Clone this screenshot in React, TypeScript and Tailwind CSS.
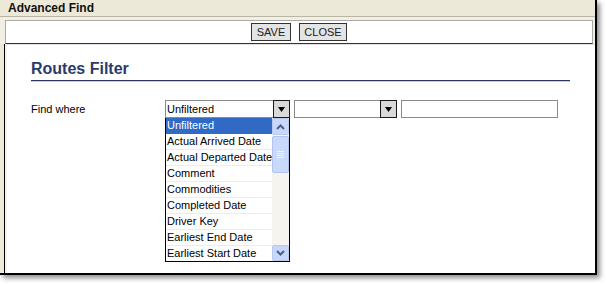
const options = [
  "Unfiltered",
  "Actual Arrived Date",
  "Actual Departed Date",
  "Comment",
  "Commodities",
  "Completed Date",
  "Driver Key",
  "Earliest End Date",
  "Earliest Start Date",
];

const Arrow = () => (
  <div className="w-[17px] h-[18px] border border-[#1a1a1a] bg-[#d9d9d9] flex items-center justify-center">
    <svg width="7" height="5" viewBox="0 0 7 5">
      <path d="M0 0h7L3.5 5z" fill="#000" />
    </svg>
  </div>
);

const Chevron = ({ up }: { up?: boolean }) => (
  <svg width="9" height="6" viewBox="0 0 9 6">
    <path
      d={up ? "M1 5L4.5 1.5L8 5" : "M1 1L4.5 4.5L8 1"}
      stroke="#4d6185"
      strokeWidth="2"
      fill="none"
    />
  </svg>
);

const Scrollbar = () => (
  <div className="absolute right-0 top-0 bottom-0 w-[17px] bg-[#f5f4ee] flex flex-col">
    <div className="h-[17px] border border-[#b7c9f3] bg-[#c6d7fb] rounded-[2px] flex items-center justify-center">
      <Chevron up />
    </div>
    <div className="mt-[1px] h-[37px] border border-[#b0c5f3] bg-[#c9d9fc] rounded-[2px] flex flex-col items-center justify-center gap-[1px]">
      <div className="w-[7px] h-[1px] bg-[#eef3fe]" />
      <div className="w-[7px] h-[1px] bg-[#eef3fe]" />
      <div className="w-[7px] h-[1px] bg-[#eef3fe]" />
      <div className="w-[7px] h-[1px] bg-[#eef3fe]" />
    </div>
    <div className="flex-1" />
    <div className="h-[16px] border border-[#b7c9f3] bg-[#c6d7fb] rounded-[2px] flex items-center justify-center">
      <Chevron />
    </div>
  </div>
);

const DropList = () => (
  <div className="absolute left-0 top-[18px] w-[125px] border-x border-b border-black bg-white">
    <div className="relative pr-[17px]">
      {options.map((o, i) => (
        <div
          key={o}
          className={
            i === 0
              ? "h-[16px] leading-[15px] pl-[1px] bg-[#316ac5] text-white border-b border-[#316ac5] whitespace-nowrap overflow-hidden"
              : i === options.length - 1
              ? "h-[15px] leading-[15px] pl-[1px] whitespace-nowrap overflow-hidden"
              : "h-[16px] leading-[15px] pl-[1px] border-b border-[#ececec] whitespace-nowrap overflow-hidden"
          }
        >
          {o}
        </div>
      ))}
      <Scrollbar />
    </div>
  </div>
);

export default function App() {
  return (
    <div className="w-[607px] h-[284px] bg-white overflow-hidden text-[11px] text-black font-['Liberation_Sans',Arial,sans-serif]">
      <div className="w-[597px] h-[275px] border-r-2 border-b-2 border-black bg-[#ece9d8] shadow-[3px_3px_5px_rgba(0,0,0,0.45)] flex flex-col">
        <div className="h-[17px] border-b border-[#b9b6a4] pl-[8px] text-[12px] leading-[16px] font-bold text-[#111]">
          Advanced Find
        </div>
        <div className="pt-[3px] pl-[5px] pr-[2px] bg-[#f1efe4]">
          <div className="h-[24px] bg-white border border-[#a9a9a9] border-b-[#2b3152] flex justify-center gap-[8px] pt-[2px]">
            <button className="w-[40px] h-[18px] bg-[#e4e4e4] border border-[#333] text-[11px] leading-[16px] text-[#222]">
              SAVE
            </button>
            <button className="w-[48px] h-[18px] bg-[#e4e4e4] border border-[#333] text-[11px] leading-[16px] text-[#222]">
              CLOSE
            </button>
          </div>
        </div>
        <div className="flex-1 ml-[4px] border-l border-black bg-white">
          <div className="h-full border-l-2 border-[#f6f4ea] border-t border-t-[#e2e2e2] pl-[24px] pt-[15px]">
            <div className="w-[539px] border-b border-[#2a3562] shadow-[0_1px_0_#c9cbd6] pb-[2px] text-[16px] leading-[18px] font-bold text-[#2b3a6b]">
              Routes Filter
            </div>
            <div className="mt-[19px] flex items-center">
              <div className="w-[134px]">Find where</div>
              <div className="relative flex">
                <div className="w-[108px] h-[18px] border-y border-l border-[#8a8a8a] pl-[1px] leading-[16px]">
                  Unfiltered
                </div>
                <Arrow />
                <DropList />
              </div>
              <div className="ml-[4px] flex">
                <div className="w-[86px] h-[18px] border-y border-l border-[#8a8a8a]" />
                <Arrow />
              </div>
              <div className="ml-[4px] w-[157px] h-[18px] border border-[#8a8a8a]" />
            </div>
          </div>
        </div>
      </div>
    </div>
  );
}
